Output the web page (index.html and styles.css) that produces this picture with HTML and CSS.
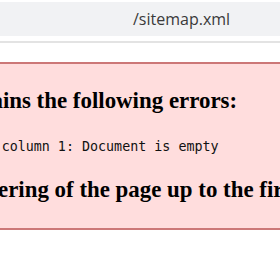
FILE: index.html
```html
<!DOCTYPE html>
<html>
<head>
<meta charset="utf-8">
<link rel="stylesheet" href="styles.css">
</head>
<body>
<div class="page">
  <header class="addressbar"><span class="url">/sitemap.xml</span></header>
  <div class="separator"></div>
  <div class="viewport">
    <div class="parsererror">
      <h3 class="err-title">This page contains the following errors:</h3>
      <div class="err-msg">error on line 1 at column 1: Document is empty</div>
      <h3 class="err-title err-title-last">Below is a rendering of the page up to the first error.</h3>
    </div>
  </div>
</div>
</body>
</html>
```

FILE: styles.css
```css
html, body {
  margin: 0;
  padding: 0;
  background: #ffffff;
}

.page {
  width: 280px;
  height: 280px;
  overflow: hidden;
  padding-top: 2px;
  box-sizing: border-box;
}

.addressbar {
  height: 34px;
  box-sizing: border-box;
  background: #f1f2f4;
  padding: 1px 0 0 133px;
  font-family: "Open Sans", sans-serif;
  font-size: 16px;
  line-height: 33px;
  color: #3a3a3a;
  white-space: nowrap;
}

.separator {
  height: 2px;
  margin-top: 5px;
  background: #e3e3e3;
}

.viewport {
  margin-top: 19px;
  overflow: hidden;
}

.parsererror {
  width: 900px;
  margin-left: -170px;
  padding: 0 0 0 17px;
  border: 2px solid #cc7777;
  background: #ffdddd;
  color: #000000;
  white-space: nowrap;
}

.err-title {
  font-family: "Liberation Serif", "Times New Roman", serif;
  font-weight: bold;
  font-size: 22.9px;
  line-height: 26px;
  margin: 24px 0 25px;
}

.err-title-last {
  margin: 22px 0 25px;
}

.err-msg {
  font-family: "DejaVu Sans Mono", "Liberation Mono", monospace;
  font-size: 13.35px;
  line-height: 16px;
  color: #111111;
}
```
